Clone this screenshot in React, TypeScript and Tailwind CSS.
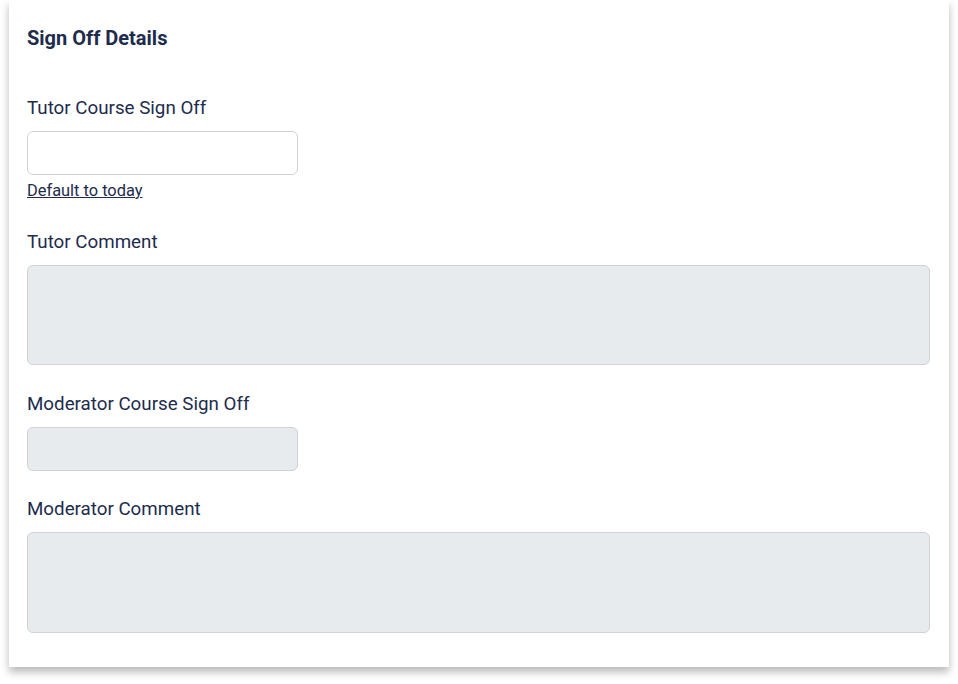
import React from 'react';

const text = 'text-[#1d2c4d]';

function Label({ children }: { children: React.ReactNode }) {
  return <label className={`block text-[18.75px] leading-[27px] pt-[1px] ${text} mb-[9px]`}>{children}</label>;
}

export default function App() {
  return (
    <div className="w-[958px] h-[684px] bg-white font-['Roboto',sans-serif] pl-[9px] pr-[9px]">
      <div className="bg-white w-[940px] h-[667px] shadow-[0_5px_8px_rgba(0,0,0,0.28)] pt-[25px] pl-[18px] pr-[19px]">
        <h2 className={`text-[20px] leading-[27px] font-bold ${text}`}>Sign Off Details</h2>

        <div className="mt-[42px]">
          <Label>Tutor Course Sign Off</Label>
          <input
            type="text"
            className="block w-[271px] h-[44px] rounded-[6px] border border-[#cfd2d6] bg-white"
          />
          <a href="#" className={`inline-block mt-[4px] text-[16.4px] leading-[24px] underline ${text}`}>
            Default to today
          </a>
        </div>

        <div className="mt-[25px]">
          <Label>Tutor Comment</Label>
          <textarea
            disabled
            className="block w-[903px] h-[100px] rounded-[6px] border border-[#cfd2d6] bg-[#e8ebee] resize-none"
          />
        </div>

        <div className="mt-[25px]">
          <Label>Moderator Course Sign Off</Label>
          <input
            type="text"
            disabled
            className="block w-[271px] h-[44px] rounded-[6px] border border-[#cfd2d6] bg-[#e8ebee]"
          />
        </div>

        <div className="mt-[24px]">
          <Label>Moderator Comment</Label>
          <textarea
            disabled
            className="block w-[903px] h-[101px] rounded-[6px] border border-[#cfd2d6] bg-[#e8ebee] resize-none"
          />
        </div>
      </div>
    </div>
  );
}
